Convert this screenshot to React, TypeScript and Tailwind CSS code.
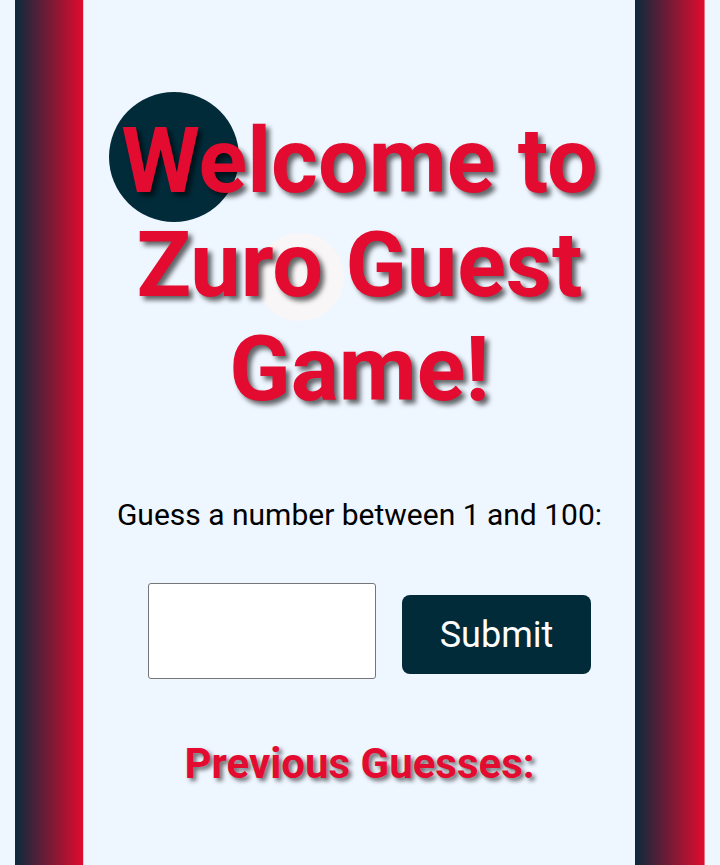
const App = () => {
  return (
    <div
      className="relative flex h-[865px] w-[720px] overflow-hidden bg-[#eef6ff] px-[15px]"
      style={{ fontFamily: "Roboto, 'Noto Sans', sans-serif" }}
    >
      {/* left stripe */}
      <div className="w-[69px] shrink-0 border-r border-[#f7c6cf] bg-[linear-gradient(to_right,#0b2a3d,#e00b2e)]" />

      <main className="relative flex flex-1 flex-col items-center">
        {/* decorative circles */}
        <div className="absolute left-[25px] top-[92px] h-[130px] w-[130px] rounded-full bg-[#022b3a]" />
        <div className="absolute left-[172px] top-[233px] h-[88px] w-[88px] rounded-full bg-[#f9f6f7]" />

        <h1 className="relative mt-[110px] text-center text-[90px] font-bold leading-[104px] text-[#e30b2f] [text-shadow:4px_4px_5px_rgba(0,0,0,0.6)]">
          Welcome to
          <br />
          Zuro Guest
          <br />
          Game!
        </h1>

        <p className="mt-[75px] text-[30px] leading-[35px] text-black">Guess a number between 1 and 100:</p>

        <div className="mt-[51px] flex items-start gap-[26px] pl-[20px]">
          <input
            type="number"
            className="h-[96px] w-[228px] rounded-[3px] border border-[#767676] bg-white"
          />
          <button className="mt-[12px] h-[79px] w-[189px] rounded-[8px] bg-[#022b3a] text-[36px] text-white">
            Submit
          </button>
        </div>

        <h2 className="mt-[60px] text-[42px] font-bold leading-[49px] text-[#e30b2f] [text-shadow:3px_3px_4px_rgba(0,0,0,0.55)]">
          Previous Guesses:
        </h2>
      </main>

      {/* right stripe */}
      <div className="w-[70px] shrink-0 border-r border-[#e9707f] bg-[linear-gradient(to_right,#0b2a3d,#e00b2e)]" />
    </div>
  )
}

export default App
